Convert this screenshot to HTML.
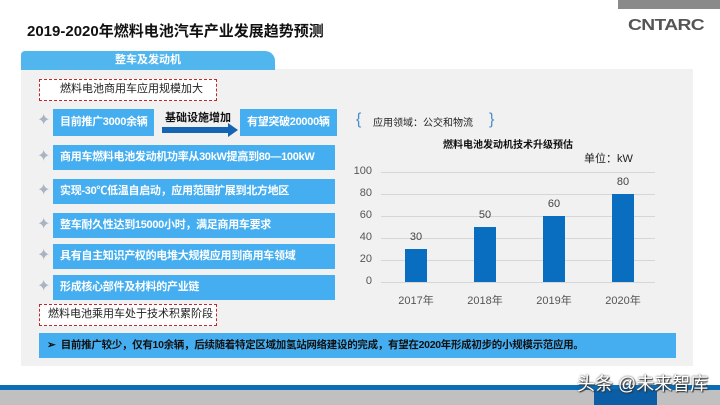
<!DOCTYPE html>
<html><head><meta charset="utf-8"><style>
*{margin:0;padding:0;box-sizing:border-box}
body{width:720px;height:405px;overflow:hidden;background:#fff;position:relative;font-family:"Liberation Sans","Noto Sans CJK SC",sans-serif}
.a{position:absolute}
.box{position:absolute;background:#45aef0;color:#fff;font-weight:bold;font-size:11px;line-height:25px;padding-left:7px;white-space:nowrap;letter-spacing:-0.3px}
.star{position:absolute;color:#a9b4c2;font-size:16px;left:37px}
.dash{position:absolute;border:1px dashed #c0282d;background:#fff;font-size:11px;line-height:19px;color:#222}
.g{position:absolute;left:381px;width:274px;height:1px;background:#d6d6d6}
.yl{position:absolute;left:350px;width:22px;text-align:right;font-size:11px;color:#555}
.bar{position:absolute;width:22px;background:#0a6ec0}
.bl{position:absolute;width:40px;text-align:center;font-size:11px;color:#444}
.xl{position:absolute;top:292px;width:60px;text-align:center;font-size:11px;color:#555}
</style></head><body>
<div class="a" style="left:618px;top:0;width:102px;height:9px;background:#8a8a8a"></div>
<div class="a" style="left:628px;top:17px;font-size:16px;font-weight:bold;color:#555;letter-spacing:-0.5px;transform:scaleX(1.2);transform-origin:left">CNTARC</div>
<div class="a" style="left:27px;top:20px;font-size:15px;font-weight:bold;color:#111">2019-2020年燃料电池汽车产业发展趋势预测</div>
<div class="a" style="left:21px;top:69px;width:672px;height:297px;background:#f1f1f1"></div>
<div class="a" style="left:21px;top:51px;width:254px;height:19px;background:#52b6ee;border-radius:4px 10px 0 0;color:#fff;font-weight:bold;font-size:11px;text-align:center;line-height:19px">整车及发动机</div>
<div class="dash" style="left:39px;top:79px;width:178px;height:22px;padding-left:20px">燃料电池商用车应用规模加大</div>
<div class="star" style="top:110px">✦</div>
<div class="box" style="left:53px;top:109px;width:101px;height:27px;line-height:27px">目前推广3000余辆</div>
<div class="a" style="left:165px;top:109px;font-size:11px;font-weight:bold;color:#111">基础设施增加</div>
<svg class="a" style="left:162px;top:123px" width="78" height="14"><path d="M0 4H66V0L76 7L66 14V10H0Z" fill="#1565b5"/></svg>
<div class="box" style="left:240px;top:109px;width:97px;height:27px;line-height:27px">有望突破20000辆</div>
<div class="a" style="left:356px;top:111px;font-size:16px;color:#4a8cc8">{</div>
<div class="a" style="left:373px;top:114px;font-size:10px;color:#222">应用领域：公交和物流</div>
<div class="a" style="left:489px;top:111px;font-size:16px;color:#4a8cc8">}</div>
<div class="star" style="top:146px">✦</div>
<div class="box" style="left:53px;top:145px;width:282px">商用车燃料电池发动机功率从30kW提高到80—100kW</div>
<div class="star" style="top:180px">✦</div>
<div class="box" style="left:53px;top:179px;width:282px">实现-30℃低温自启动，应用范围扩展到北方地区</div>
<div class="star" style="top:214px">✦</div>
<div class="box" style="left:53px;top:213px;width:282px">整车耐久性达到15000小时，满足商用车要求</div>
<div class="star" style="top:245px">✦</div>
<div class="box" style="left:53px;top:244px;width:282px">具有自主知识产权的电堆大规模应用到商用车领域</div>
<div class="star" style="top:276px">✦</div>
<div class="box" style="left:53px;top:275px;width:282px">形成核心部件及材料的产业链</div>
<div class="dash" style="left:39px;top:304px;width:178px;height:22px;padding-left:8px">燃料电池乘用车处于技术积累阶段</div>
<div class="box" style="left:39px;top:333px;width:637px;height:25px;color:#111;font-size:10.5px;padding-left:8px">➢&nbsp; 目前推广较少，仅有10余辆，后续随着特定区域加氢站网络建设的完成，有望在2020年形成初步的小规模示范应用。</div>
<div class="a" style="left:443px;top:136px;font-size:10px;font-weight:bold;color:#111">燃料电池发动机技术升级预估</div>
<div class="a" style="left:584px;top:150px;font-size:11px;color:#222">单位：kW</div>
<div class="g" style="top:172px"></div><div class="g" style="top:194px"></div><div class="g" style="top:216px"></div><div class="g" style="top:238px"></div><div class="g" style="top:260px"></div><div class="g" style="top:282px"></div>
<div class="yl" style="top:165px">100</div><div class="yl" style="top:187px">80</div><div class="yl" style="top:209px">60</div><div class="yl" style="top:231px">40</div><div class="yl" style="top:253px">20</div><div class="yl" style="top:275px">0</div>
<div class="bar" style="left:405px;top:249px;height:33px"></div>
<div class="bar" style="left:474px;top:227px;height:55px"></div>
<div class="bar" style="left:543px;top:216px;height:66px"></div>
<div class="bar" style="left:612px;top:194px;height:88px"></div>
<div class="bl" style="left:396px;top:231px">30</div>
<div class="bl" style="left:465px;top:209px">50</div>
<div class="bl" style="left:534px;top:198px">60</div>
<div class="bl" style="left:603px;top:176px">80</div>
<div class="xl" style="left:386px">2017年</div><div class="xl" style="left:455px">2018年</div><div class="xl" style="left:524px">2019年</div><div class="xl" style="left:593px">2020年</div>
<div class="a" style="left:0;top:385px;width:720px;height:5px;background:#0b6db5"></div>
<div class="a" style="left:0;top:390px;width:720px;height:15px;background:#c0c0c0"></div>
<div class="a" style="left:594px;top:389px;width:63px;height:16px;background:#0b5da5"></div>
<div class="a" style="left:577px;top:370px;font-size:18px;color:#fff;text-shadow:0 0 2px #333,1px 1px 1px #333">头条 @未来智库</div>
</body></html>
